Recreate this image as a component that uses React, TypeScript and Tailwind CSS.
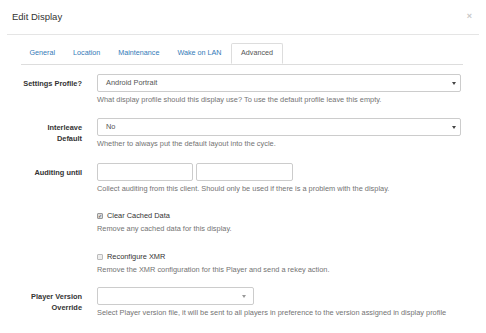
import React from "react";

const Caret = ({ light }: { light?: boolean }) => (
  <span
    className={
      light
        ? "w-0 h-0 border-l-[2px] border-r-[2px] border-t-[3px] border-l-transparent border-r-transparent border-t-[#999]"
        : "w-0 h-0 border-l-[2px] border-r-[2px] border-t-[3px] border-l-transparent border-r-transparent border-t-[#444]"
    }
  />
);

const Help = ({ children }: { children: React.ReactNode }) => (
  <p className="mt-[3px] text-[7.4px] leading-[10px] text-[#737373] whitespace-nowrap">{children}</p>
);

const Label = ({ children }: { children: React.ReactNode }) => (
  <div className="w-[82px] shrink-0 text-right text-[7.4px] leading-[11px] font-bold text-[#333]">
    {children}
  </div>
);

export default function App() {
  const tabs = ["General", "Location", "Maintenance", "Wake on LAN", "Advanced"];

  return (
    <div className="w-[486px] h-[333px] bg-white overflow-hidden font-['Liberation_Sans',Arial,sans-serif] text-[#333]">
      {/* header */}
      <div className="mx-[7px] h-[35px] pl-[5px] pr-[7px] border-b border-[#e5e5e5] flex items-center justify-between">
        <h4 className="text-[9.5px] text-[#333]">Edit Display</h4>
        <span className="text-[9px] text-[#c8c8c8] font-bold">×</span>
      </div>

      {/* tabs */}
      <ul className="mx-[21px] mt-[8px] w-[442px] border-b border-[#ddd] flex">
        {tabs.map((t) => (
          <li
            key={t}
            className={
              t === "Advanced"
                ? "mr-[1px] h-[21px] -mb-px px-[9px] flex items-center text-[7.2px] text-[#555] bg-white border border-[#ddd] border-b-white rounded-t-[2px]"
                : "mr-[1px] h-[21px] px-[8.5px] flex items-center text-[7.2px] text-[#337ab7]"
            }
          >
            {t}
          </li>
        ))}
      </ul>

      {/* form */}
      <div className="mt-[9px]">
        <div className="flex">
          <Label>
            <div className="pt-[4px]">Settings Profile?</div>
          </Label>
          <div className="ml-[15px] w-[364px]">
            <div className="h-[18px] border border-[#ccc] rounded-[2px] pl-[8px] pr-[4px] flex items-center justify-between text-[7.4px] text-[#555]">
              <span>Android Portrait</span>
              <Caret />
            </div>
            <Help>What display profile should this display use? To use the default profile leave this empty.</Help>
          </div>
        </div>

        <div className="flex mt-[13px]">
          <Label>
            <div className="pt-[4px]">Interleave</div>
            <div>Default</div>
          </Label>
          <div className="ml-[15px] w-[364px]">
            <div className="h-[18px] border border-[#ccc] rounded-[2px] pl-[8px] pr-[4px] flex items-center justify-between text-[7.4px] text-[#555]">
              <span>No</span>
              <Caret />
            </div>
            <Help>Whether to always put the default layout into the cycle.</Help>
          </div>
        </div>

        <div className="flex mt-[14px]">
          <Label>
            <div className="pt-[4px]">Auditing until</div>
          </Label>
          <div className="ml-[15px] w-[364px]">
            <div className="flex gap-[3px]">
              <div className="w-[96px] h-[18px] border border-[#ccc] rounded-[2px]" />
              <div className="w-[97px] h-[18px] border border-[#ccc] rounded-[2px]" />
            </div>
            <Help>Collect auditing from this client. Should only be used if there is a problem with the display.</Help>
          </div>
        </div>

        <div className="flex mt-[17px]">
          <div className="w-[82px] shrink-0" />
          <div className="ml-[15px] w-[364px]">
            <label className="flex items-center gap-[4px] text-[7.4px] leading-[10px] text-[#333]">
              <span className="w-[6px] h-[6px] rounded-[1px] border border-[#999] bg-[#ddd] flex items-center justify-center text-[5px] leading-none text-[#333]">✓</span>
              Clear Cached Data
            </label>
            <Help>Remove any cached data for this display.</Help>
          </div>
        </div>

        <div className="flex mt-[18px]">
          <div className="w-[82px] shrink-0" />
          <div className="ml-[15px] w-[364px]">
            <label className="flex items-center gap-[4px] text-[7.4px] leading-[10px] text-[#333]">
              <span className="w-[6px] h-[6px] rounded-[1px] border border-[#bbb] bg-[#eee]" />
              Reconfigure XMR
            </label>
            <Help>Remove the XMR configuration for this Player and send a rekey action.</Help>
          </div>
        </div>

        <div className="flex mt-[12px]">
          <Label>
            <div className="pt-[4px]">Player Version</div>
            <div>Override</div>
          </Label>
          <div className="ml-[15px] w-[364px]">
            <div className="w-[157px] h-[18px] border border-[#ccc] rounded-[2px] pr-[7px] flex items-center justify-end">
              <Caret light />
            </div>
            <Help>Select Player version file, it will be sent to all players in preference to the version assigned in display profile</Help>
          </div>
        </div>
      </div>
    </div>
  );
}
